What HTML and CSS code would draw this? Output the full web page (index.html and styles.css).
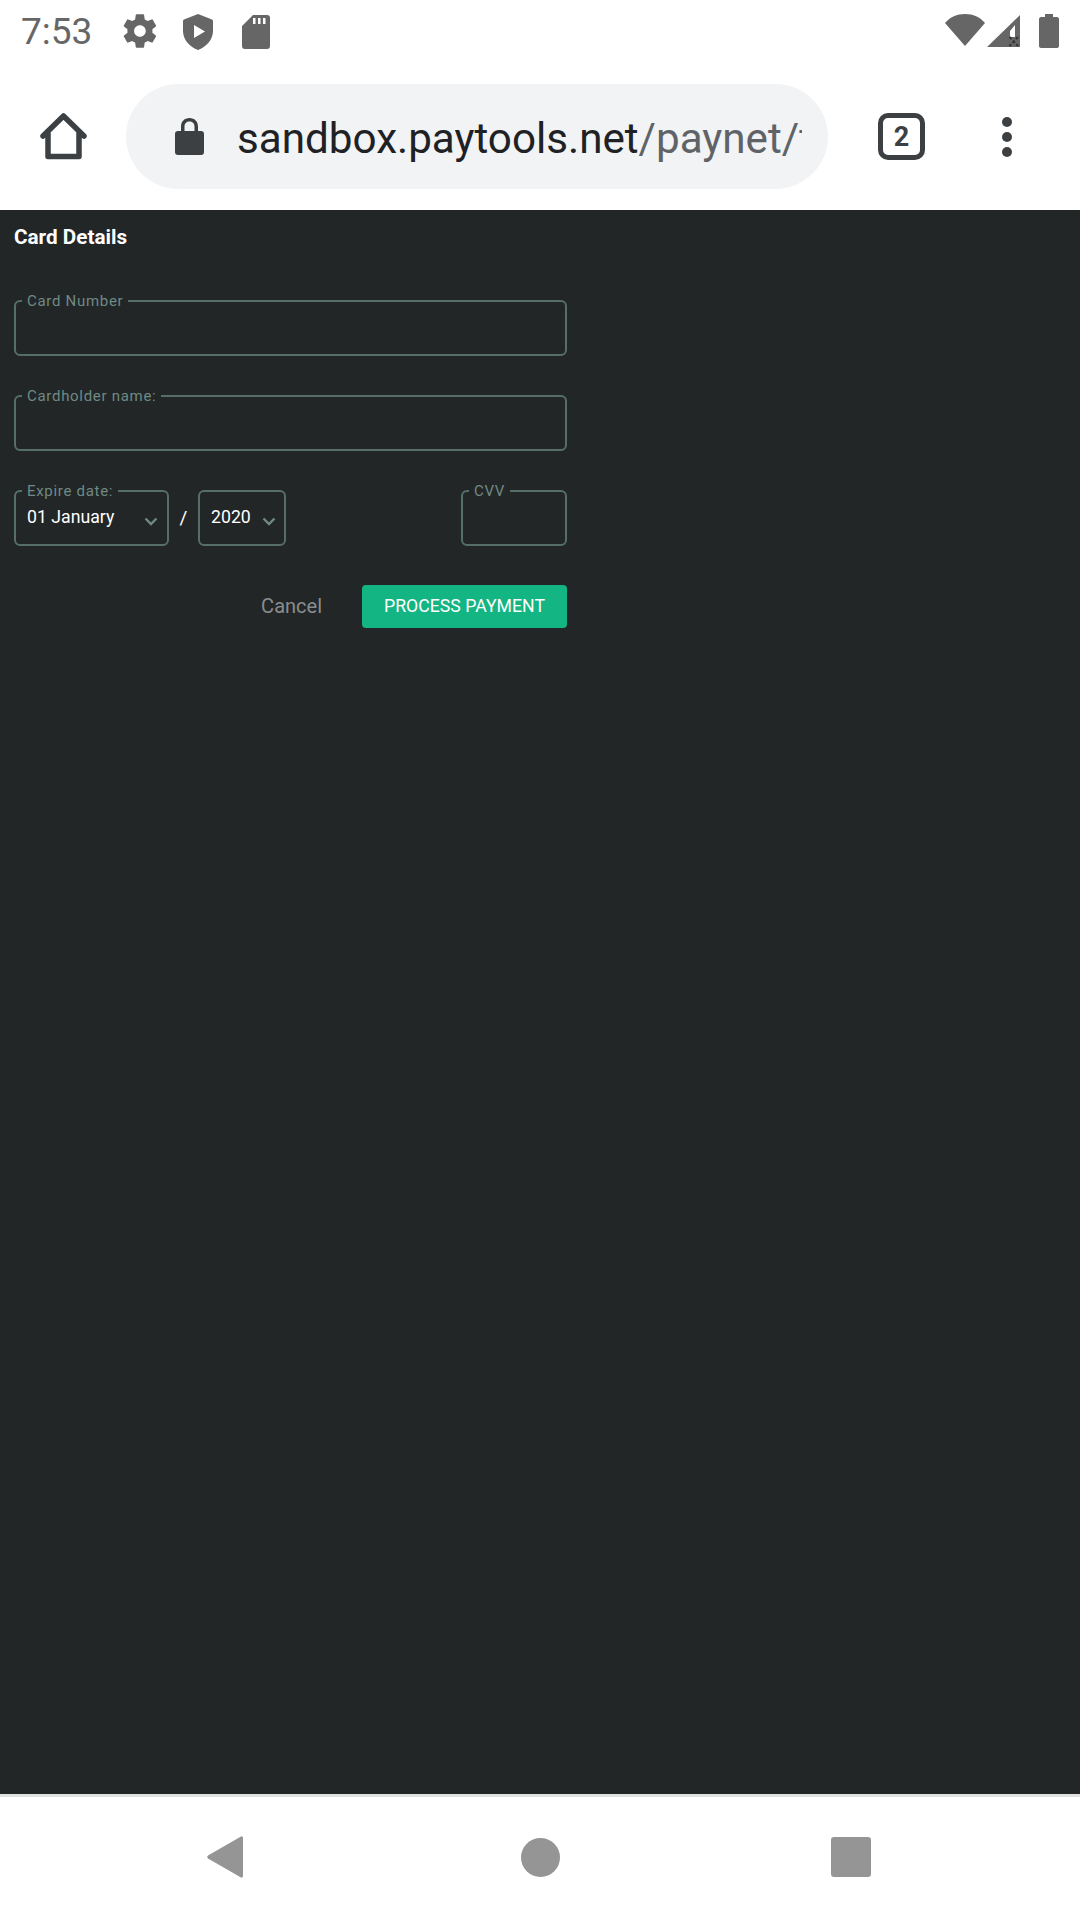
FILE: index.html
```html
<!DOCTYPE html>
<html lang="en">
<head>
<meta charset="utf-8">
<title>Card Details</title>
<link rel="stylesheet" href="styles.css">
</head>
<body>
<div class="phone">
  <header class="status">
    <span class="clock">7:53</span>
    <svg class="ic gear" viewBox="0 0 24 24"><path d="M19.4 13c.04-.33.07-.66.07-1s-.03-.67-.07-1l2.1-1.65c.2-.15.25-.42.12-.64l-2-3.46c-.12-.22-.39-.3-.61-.22l-2.49 1c-.52-.4-1.08-.73-1.69-.98l-.38-2.65C14.4 2.18 14.2 2 13.95 2h-4c-.25 0-.45.18-.49.42l-.38 2.65c-.61.25-1.17.59-1.69.98l-2.49-1c-.23-.09-.49 0-.61.22l-2 3.46c-.13.22-.07.49.12.64L4.51 11c-.04.33-.07.67-.07 1s.03.67.07 1l-2.1 1.65c-.19.15-.25.42-.12.64l2 3.46c.12.22.39.3.61.22l2.49-1c.52.4 1.08.73 1.69.98l.38 2.65c.04.24.24.42.49.42h4c.25 0 .45-.18.49-.42l.38-2.65c.61-.25 1.17-.59 1.69-.98l2.49 1c.23.09.49 0 .61-.22l2-3.46c.12-.22.07-.49-.12-.64L19.4 13zM11.95 15.5c-1.93 0-3.5-1.57-3.5-3.5s1.57-3.5 3.5-3.5 3.5 1.57 3.5 3.5-1.57 3.5-3.5 3.5z"/></svg>
    <svg class="ic shield" viewBox="0 0 30 36"><path fill-rule="evenodd" d="M15 0 29 5.500C30 6 30 7 30 8V17C30 26 23 33 15 36 7 33 0 26 0 17V8C0 7 0 6 1 5.500ZM11 11V24L22 17.500Z"/></svg>
    <svg class="ic sd" viewBox="0 0 28 34"><path fill-rule="evenodd" d="M11 0H25C27 0 28 1 28 3V31C28 33 27 34 25 34H3C1 34 0 33 0 31V11ZM11 3V9H13.500V3ZM16 3V9H18.500V3ZM21 3V9H23.500V3Z"/></svg>
    <span class="status-spacer"></span>
    <svg class="ic wifi" viewBox="0 0 40 32"><path d="M20 32 0 9C5 3 12 0 20 0S35 3 40 9Z"/></svg>
    <svg class="ic signal" viewBox="0 0 33 32"><path fill-rule="evenodd" d="M33 0V32H0ZM28 10 23 16V22H28Z"/><path class="sig-x" d="M22.500 22 31 31M31 22 22.500 31"/></svg>
    <svg class="ic battery" viewBox="0 0 20 34"><path d="M6 0H14V3H18C19 3 20 4 20 5V32C20 33 19 34 18 34H2C1 34 0 33 0 32V5C0 4 1 3 2 3H6Z"/></svg>
  </header>

  <nav class="toolbar">
    <svg class="home" viewBox="0 0 47 47"><path d="M3 23 23.500 3 44 23M8 20V43.500H39V20"/></svg>
    <div class="omnibox">
      <svg class="lock" viewBox="0 0 29 37"><path fill-rule="evenodd" d="M6 13V8.500C6 3.500 9.500 0 14.500 0S23 3.500 23 8.500V13H26C28 13 29 14 29 16V34C29 36 28 37 26 37H3C1 37 0 36 0 34V16C0 14 1 13 3 13ZM9.500 13H19.500V8.500C19.500 5.500 17.500 3.500 14.500 3.500S9.500 5.500 9.500 8.500Z"/></svg>
      <div class="url"><span class="host">sandbox.paytools.net</span><span class="path">/paynet/t</span></div>
    </div>
    <div class="tabs">2</div>
    <div class="menu"><i></i><i></i><i></i></div>
  </nav>

  <main class="content">
    <h1 class="title">Card Details</h1>
    <form class="form">
      <fieldset class="field">
        <legend>Card Number</legend>
        <input class="control" type="text" aria-label="Card Number">
      </fieldset>
      <fieldset class="field">
        <legend>Cardholder name:</legend>
        <input class="control" type="text" aria-label="Cardholder name">
      </fieldset>
      <div class="row">
        <fieldset class="field month">
          <legend>Expire date:</legend>
          <div class="select"><span>01 January</span>
            <svg class="chev" viewBox="0 0 14 9"><path d="M1.500 1.500 7 7 12.500 1.500"/></svg></div>
        </fieldset>
        <span class="slash">/</span>
        <fieldset class="field year">
          <div class="select"><span>2020</span>
            <svg class="chev" viewBox="0 0 14 9"><path d="M1.500 1.500 7 7 12.500 1.500"/></svg></div>
        </fieldset>
        <span class="row-spacer"></span>
        <fieldset class="field cvv">
          <legend>CVV</legend>
          <input class="control" type="text" aria-label="CVV">
        </fieldset>
      </div>
      <div class="actions">
        <button class="cancel" type="button">Cancel</button>
        <button class="pay" type="button">PROCESS PAYMENT</button>
      </div>
    </form>
  </main>

  <footer class="navbar">
    <svg class="nav-ic back" viewBox="0 0 36 42"><path d="M34 0.500C35 0 36 1 36 2V40C36 41 35 42 34 41.500L1 22.500C0 21.500 0 20.500 1 19.500Z"/></svg>
    <span class="nav-ic dot"></span>
    <span class="nav-ic square"></span>
  </footer>
</div>
</body>
</html>
```
FILE: styles.css
```css
* { box-sizing: border-box; }
html, body { margin: 0; padding: 0; }
body { font-family: Roboto, "Liberation Sans", sans-serif; background: #fff; }
.phone { width: 1080px; height: 1920px; display: flex; flex-direction: column; overflow: hidden; }

/* status bar */
.status { height: 63px; flex: none; display: flex; align-items: flex-start; padding: 14px 21px 0 21px; }
.clock { font-size: 37px; line-height: 36px; color: #666; width: 103px; flex: none; }
.ic { fill: #666; flex: none; display: block; }
.gear { width: 40px; height: 40px; margin: -3px 0 0 -4px; }
.shield { width: 30px; height: 36px; margin: 0 0 0 23px; }
.sd { width: 28px; height: 34px; margin: 1px 0 0 29px; }
.status-spacer { flex: 1; }
.wifi { width: 40px; height: 32px; }
.signal { width: 33px; height: 32px; margin: 1px 0 0 2px; }
.sig-x { fill: none; stroke: #333; stroke-width: 2; stroke-dasharray: 3 2; }
.battery { width: 20px; height: 34px; margin-left: 19px; }

/* browser toolbar */
.toolbar { height: 147px; flex: none; display: flex; align-items: center; padding: 0 0 0 40px; background: #fff; }
.home { width: 47px; height: 47px; flex: none; fill: none; stroke: #3c4043; stroke-width: 5.500; stroke-linecap: round; stroke-linejoin: round; }
.omnibox { width: 702px; height: 105px; flex: none; margin-left: 39px; border-radius: 53px; background: #f1f3f4; display: flex; align-items: center; padding-left: 49px; }
.lock { width: 29px; height: 37px; flex: none; fill: #3c4043; }
.url { width: 565px; flex: none; margin-left: 33px; padding-top: 4px; font-size: 42.200px; line-height: 50px; white-space: nowrap; overflow: hidden; }
.host { color: #202124; }
.path { color: #5f6368; }
.tabs { width: 47px; height: 47px; flex: none; margin-left: 50px; border: 5px solid #3c4043; border-radius: 10px; display: flex; align-items: center; justify-content: center; font-size: 27px; font-weight: 700; color: #3c4043; }
.menu { flex: none; margin-left: 77px; display: flex; flex-direction: column; gap: 5px; }
.menu i { display: block; width: 10px; height: 10px; border-radius: 50%; background: #3c4043; }

/* page content */
.content { flex: 1; background: #222627; padding: 14px 14px 0; }
.title { margin: 0; font-size: 20.700px; line-height: 26px; font-weight: 700; color: #fff; }
.form { width: 553px; display: flex; flex-direction: column; margin-top: 43px; }
.field { margin: 0; padding: 0 0 0 11px; min-width: 0; height: 63px; border: 2px solid #566e68; border-radius: 6px; display: block; }
.field + .field { margin-top: 32px; }
.row .field { margin-top: 0; }
.field legend { padding: 0 5px; margin-left: -5px; font-size: 15px; line-height: 16px; letter-spacing: .7px; color: #6f8a84; height: 16px; }
.control { display: block; width: 100%; height: 40px; border: 0; padding: 0; background: transparent; outline: 0; color: #fff; font: 17px Roboto, sans-serif; }
.row { display: flex; align-items: flex-end; margin-top: 32px; }
.month { width: 155px; flex: none; }
.year { width: 88px; height: 56px; flex: none; }
.cvv { width: 106px; flex: none; }
.row-spacer { flex: 1; }
.slash { width: 29px; flex: none; text-align: center; align-self: flex-end; padding-bottom: 16px; color: #fff; font-size: 19px; line-height: 24px; }
.select { display: flex; justify-content: space-between; align-items: center; height: 36px; padding-right: 9px; font-size: 17.700px; line-height: 24px; color: #fff; }
.year .select { height: 50px; padding-right: 8px; }
.chev { width: 14px; height: 9px; margin-top: 8px; fill: none; stroke: #6f8a84; stroke-width: 2.400; }
.actions { display: flex; justify-content: flex-end; align-items: center; margin-top: 39px; gap: 40px; }
.cancel { border: 0; padding: 0 0 2px; background: none; font: 20px/24px Roboto, sans-serif; color: #8a8d8e; }
.pay { width: 205px; height: 43px; border: 0; border-radius: 4px; padding: 0 0 1px; background: #13b582; color: #fff; font: 17.700px/24px Roboto, sans-serif; }

/* android nav */
.navbar { height: 126px; flex: none; border-top: 3px solid #e0e0e0; background: #fff; display: flex; align-items: center; padding: 0 0 3px 207px; }
.nav-ic { flex: none; display: block; }
.back { width: 36px; height: 42px; fill: #959595; }
.dot { width: 39px; height: 39px; margin-left: 278px; border-radius: 50%; background: #959595; }
.square { width: 40px; height: 40px; margin-left: 271px; border-radius: 3px; background: #959595; }
```
